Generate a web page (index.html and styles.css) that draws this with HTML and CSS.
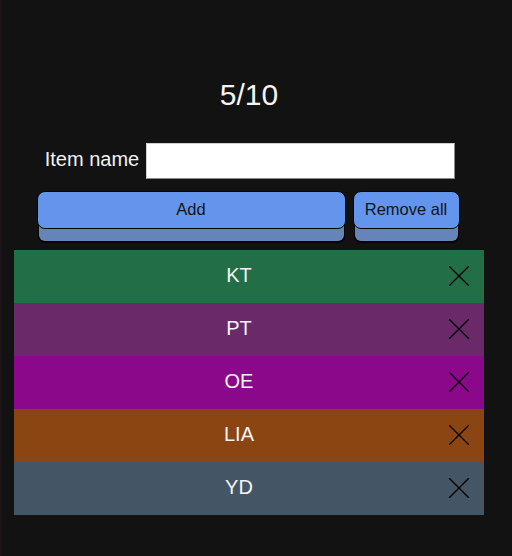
FILE: index.html
```html
<!DOCTYPE html>
<html>
<head>
<meta charset="utf-8">
<link rel="stylesheet" href="styles.css">
</head>
<body>
<div class="app">
  <h1 class="count">5/10</h1>
  <div class="form-row">
    <label class="label" for="name">Item name</label>
    <input class="input" id="name" type="text">
  </div>
  <div class="btn-row">
    <button class="btn btn-add">Add</button>
    <button class="btn btn-remove">Remove all</button>
  </div>
  <ul class="list">
    <li class="item c1"><span class="item-text">KT</span><svg class="x" viewBox="0 0 20 20"><path d="M0 0L20 20M20 0L0 20"/></svg></li>
    <li class="item c2"><span class="item-text">PT</span><svg class="x" viewBox="0 0 20 20"><path d="M0 0L20 20M20 0L0 20"/></svg></li>
    <li class="item c3"><span class="item-text">OE</span><svg class="x" viewBox="0 0 20 20"><path d="M0 0L20 20M20 0L0 20"/></svg></li>
    <li class="item c4"><span class="item-text">LIA</span><svg class="x" viewBox="0 0 20 20"><path d="M0 0L20 20M20 0L0 20"/></svg></li>
    <li class="item c5"><span class="item-text">YD</span><svg class="x" viewBox="0 0 20 20"><path d="M0 0L20 20M20 0L0 20"/></svg></li>
  </ul>
</div>
</body>
</html>
```
FILE: styles.css
```css
html, body {
  margin: 0;
  padding: 0;
  background: #121212;
  height: 100%;
}
body {
  font-family: "Liberation Sans", Arial, sans-serif;
  color: #f2f2f2;
  border-left: 2px solid #1c1419;
  box-sizing: border-box;
}
.app {
  width: 470px;
  margin-left: 12px;
  padding-top: 77px;
}
.count {
  margin: 0;
  font-size: 30px;
  font-weight: normal;
  line-height: 36px;
  text-align: center;
  color: #f4f4f4;
}
.form-row {
  display: flex;
  justify-content: center;
  align-items: center;
  gap: 7px;
  margin-top: 30px;
  padding-left: 2px;
}
.label {
  font-size: 20px;
  line-height: 24px;
  margin-bottom: 4px;
}
.input {
  box-sizing: border-box;
  width: 309px;
  height: 36px;
  margin: 0;
  background: #fff;
  border: 1px solid #d0d0d0;
  border-right-color: #8a8a8a;
  border-bottom-color: #8a8a8a;
  border-radius: 0;
  font-size: 18px;
}
.btn-row {
  display: flex;
  justify-content: center;
  gap: 7px;
  margin-top: 12px;
  padding-right: 2px;
}
.btn {
  box-sizing: border-box;
  height: 38px;
  margin: 0;
  padding: 0 0 2px;
  background: #6495ed;
  color: #141414;
  border: 1px solid #050505;
  border-radius: 8px;
  font-family: "Liberation Sans", Arial, sans-serif;
  font-size: 16.5px;
  box-shadow: 0 14px 0 -2px #6585b8, 0 15px 0 -1px #050505;
}
.btn-add { width: 309px; }
.btn-remove { width: 107px; }
.list {
  list-style: none;
  margin: 21px 0 0;
  padding: 0;
}
.item {
  display: flex;
  align-items: center;
  height: 53px;
  padding-right: 15px;
}
.item-text {
  flex: 1;
  margin-right: -15px;
  text-align: center;
  font-size: 20px;
  color: #f4f4f4;
  padding-bottom: 2px;
}
.x {
  width: 20px;
  height: 20px;
  margin-bottom: 2px;
  fill: none;
  stroke: #000;
  stroke-width: 1.3;
}
.c1 { background: #226e46; }
.c2 { background: #6a2a6a; }
.c3 { background: #8b088b; }
.c4 { background: #8b4513; }
.c5 { background: #445566; }
```
